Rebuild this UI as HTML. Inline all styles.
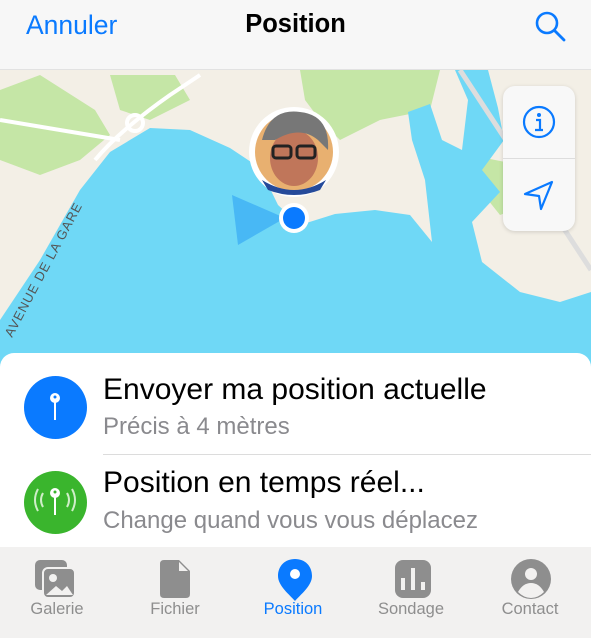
<!DOCTYPE html>
<html><head><meta charset="utf-8"><style>
*{margin:0;padding:0;box-sizing:border-box}
body{width:591px;height:638px;overflow:hidden;font-family:"Liberation Sans",sans-serif;background:#fff;position:relative}
.hdr{position:absolute;left:0;top:0;width:591px;height:70px;background:#f7f7f7;border-bottom:1px solid #e2e2e2}
.hdr .l{position:absolute;left:26px;top:10px;font-size:26.5px;color:#0a7aff}
.hdr .t{position:absolute;left:0;width:591px;top:10px;text-align:center;font-size:25.5px;font-weight:bold;color:#000}
.map{position:absolute;left:0;top:70px;width:591px;height:300px}
.sheet{position:absolute;left:0;top:353px;width:591px;height:200px;background:#fff;border-radius:14px 14px 0 0}
.row{position:absolute;left:0;width:591px}
.ic{position:absolute;left:24px;width:63px;height:63px;border-radius:50%}
.t1{position:absolute;left:103px;font-size:30px;color:#000;white-space:nowrap}
.t2{position:absolute;left:103px;font-size:24px;color:#8a8a8e;white-space:nowrap}
.tab{position:absolute;left:0;top:547px;width:591px;height:91px;background:#f2f1f0}
.ti{position:absolute;top:53px;font-size:16.5px;color:#8e8e8e;width:100px;text-align:center}
</style></head><body>
<div class="hdr"><div class="t">Position</div><div class="l">Annuler</div>
<svg style="position:absolute;left:532px;top:8px" width="36" height="36" viewBox="0 0 36 36"><circle cx="15" cy="15" r="10" fill="none" stroke="#0a7aff" stroke-width="2.6"/><line x1="22.5" y1="22.5" x2="32" y2="32" stroke="#0a7aff" stroke-width="2.8" stroke-linecap="round"/></svg></div>
<svg class="map" viewBox="0 70 591 300" width="591" height="300">
<rect x="0" y="70" width="591" height="300" fill="#f3efe6"/>
<path d="M0 90 L40 75 L95 110 L110 135 L80 160 L40 175 L0 160Z" fill="#c5e6a6"/>
<path d="M110 75 L175 75 L190 100 L150 120 L120 110Z" fill="#c5e6a6"/>
<path d="M300 70 L440 70 L430 110 L380 120 L340 140 L320 120 L305 100Z" fill="#c5e6a6"/>
<path d="M470 155 L520 165 L540 200 L500 215 L480 190Z" fill="#c5e6a6"/>
<path d="M0 355 L0 320 L40 260 L80 190 L110 152 L150 128 L190 130 L230 148 L260 168 L278 205 L300 225 L335 214 L375 210 L410 215 L432 242 L425 180 L412 140 L408 112 L430 104 L442 140 L462 150 L468 100 L455 70 L488 70 L498 108 L504 140 L482 170 L500 192 L472 222 L482 262 L520 292 L560 302 L591 292 L591 370 L0 370Z" fill="#6fd8f6"/>
<path d="M95 160 Q120 130 170 95 L200 75 M0 120 Q60 130 120 140" stroke="#fff" stroke-width="4" fill="none"/>
<circle cx="135" cy="123" r="8" fill="none" stroke="#fff" stroke-width="4"/>
<path d="M460 70 L591 270" stroke="#ddd" stroke-width="5"/>
<text transform="translate(12 338) rotate(-62)" font-size="13" fill="#555" font-family="Liberation Sans" letter-spacing="1">AVENUE DE LA GARE</text>
<path d="M285 218 L232 195 L238 245Z" fill="#3fb0f5" opacity="0.8"/>
<circle cx="294" cy="218" r="15" fill="#fff"/><circle cx="294" cy="218" r="11" fill="#0a7aff"/>
<circle cx="294" cy="152" r="45" fill="#fff"/>
<circle cx="294" cy="152" r="39" fill="#e8b070"/>
<ellipse cx="294" cy="158" rx="24" ry="28" fill="#c0765a"/>
<path d="M262 140 Q270 108 300 112 Q330 115 328 150 L318 140 Q300 125 275 140Z" fill="#777"/>
<rect x="273" y="146" width="18" height="12" rx="3" fill="none" stroke="#222" stroke-width="3"/><rect x="297" y="146" width="18" height="12" rx="3" fill="none" stroke="#222" stroke-width="3"/>
<path d="M262 180 Q294 200 326 180 L320 190 Q294 200 268 190Z" fill="#254a9a"/>
</svg>
<div style="position:absolute;left:503px;top:86px;width:72px;height:145px;background:#f8f8f8;border-radius:12px;box-shadow:0 1px 4px rgba(0,0,0,.15)">
<div style="position:absolute;left:0;top:72px;width:72px;height:1px;background:#ddd"></div>
<svg style="position:absolute;left:19px;top:19px" width="34" height="34" viewBox="0 0 34 34"><circle cx="17" cy="17" r="15" fill="none" stroke="#0a7aff" stroke-width="2.2"/><circle cx="17" cy="10" r="2" fill="#0a7aff"/><path d="M14 15h4v10M13 25h8" stroke="#0a7aff" stroke-width="2.2" fill="none"/></svg>
<svg style="position:absolute;left:19px;top:92px" width="34" height="34" viewBox="0 0 34 34"><path d="M30 4 L3 16 L17 18 L19 31Z" fill="none" stroke="#0a7aff" stroke-width="2.2" stroke-linejoin="round"/></svg>
</div>
<div class="sheet">
<div class="row" style="top:0">
<div class="ic" style="top:23px;background:#0a7aff"><svg width="63" height="63"><circle cx="31" cy="22" r="5" fill="#fff"/><circle cx="31" cy="21" r="1.5" fill="#0a7aff"/><line x1="31" y1="26" x2="31" y2="44" stroke="#fff" stroke-width="2"/></svg></div>
<div class="t1" style="top:20px">Envoyer ma position actuelle</div>
<div class="t2" style="top:60px">Précis à 4 mètres</div></div>
<div style="position:absolute;left:103px;top:101px;width:488px;height:1px;background:#dcdcdc"></div>
<div class="row" style="top:0">
<div class="ic" style="top:118px;background:#3ab52d"><svg width="63" height="63"><circle cx="31" cy="22" r="5" fill="#fff"/><circle cx="31" cy="21" r="1.5" fill="#3ab52d"/><line x1="31" y1="26" x2="31" y2="44" stroke="#fff" stroke-width="2"/><path d="M19 22 Q15 29 19 36 M43 22 Q47 29 43 36 M14 18 Q8 29 14 40 M48 18 Q54 29 48 40" stroke="#cfeec8" stroke-width="2" fill="none"/></svg></div>
<div class="t1" style="top:113px">Position en temps réel...</div>
<div class="t2" style="top:154px">Change quand vous vous déplacez</div></div>
</div>
<div class="tab">
<svg style="position:absolute;left:33px;top:11px" width="50" height="45"><rect x="2" y="2" width="32" height="30" rx="5" fill="#8e8e8e"/><rect x="10" y="10" width="32" height="30" rx="5" fill="#8e8e8e" stroke="#f2f1f0" stroke-width="2"/><circle cx="20" cy="20" r="4" fill="#f2f1f0"/><path d="M13 37 L23 28 L29 33 L34 28 L40 37Z" fill="#f2f1f0"/></svg>
<svg style="position:absolute;left:158px;top:11px" width="36" height="42"><path d="M5 2 H21 L32 13 V36 Q32 40 28 40 H6 Q2 40 2 36 V6 Q2 2 6 2Z" fill="#8e8e8e"/><path d="M21 4 L30 13 H21Z" fill="#f2f1f0"/></svg>
<svg style="position:absolute;left:276px;top:10px" width="38" height="46"><path d="M19 2 C9 2 2 9 2 19 C2 29 14 38 19 44 C24 38 36 29 36 19 C36 9 29 2 19 2Z" fill="#0a7aff"/><circle cx="19" cy="17" r="5" fill="#fff"/></svg>
<svg style="position:absolute;left:393px;top:11px" width="40" height="42"><rect x="2" y="2" width="36" height="38" rx="8" fill="#8e8e8e"/><rect x="8" y="20" width="4" height="12" fill="#f2f1f0"/><rect x="18" y="10" width="4" height="22" fill="#f2f1f0"/><rect x="28" y="24" width="4" height="8" fill="#f2f1f0"/></svg>
<svg style="position:absolute;left:509px;top:10px" width="44" height="44"><circle cx="22" cy="22" r="20" fill="#8e8e8e"/><circle cx="22" cy="17" r="6" fill="#f2f1f0"/><path d="M9 35 Q14 26 22 26 Q30 26 35 35 Q29 41 22 41 Q15 41 9 35Z" fill="#f2f1f0"/></svg>
<div class="ti" style="left:7px">Galerie</div>
<div class="ti" style="left:125px">Fichier</div>
<div class="ti" style="left:243px;color:#0a7aff">Position</div>
<div class="ti" style="left:361px">Sondage</div>
<div class="ti" style="left:480px">Contact</div>
</div>
</body></html>
